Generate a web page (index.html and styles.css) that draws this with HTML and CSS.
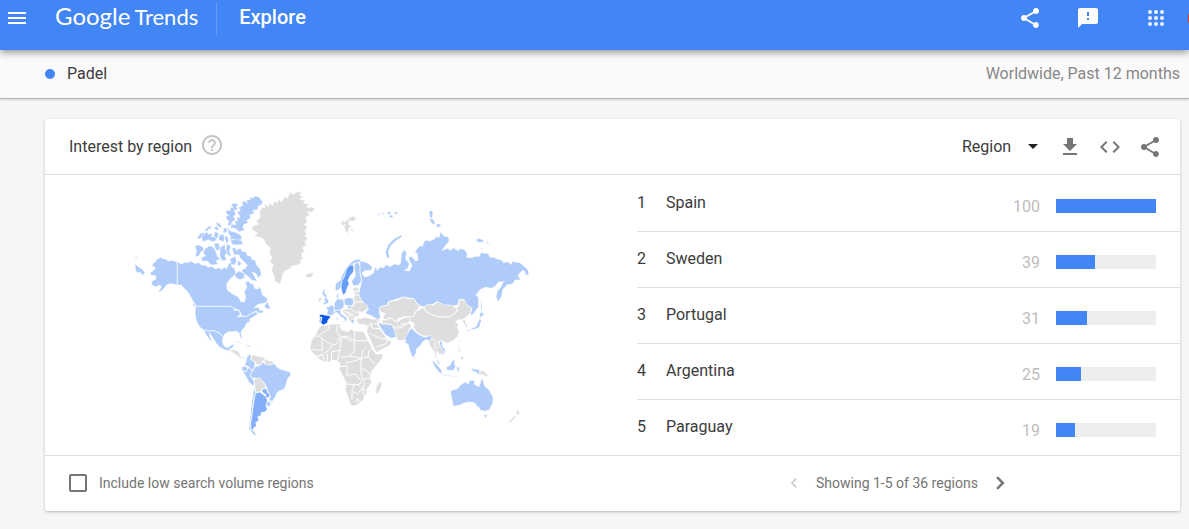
FILE: index.html
```
<!DOCTYPE html>
<html lang="en">
<head>
  <meta charset="utf-8">
  <meta name="viewport" content="width=device-width, initial-scale=1">
  <title>Padel - Explore - Google Trends</title>
  <link rel="stylesheet" href="styles.css">
</head>
<body>

<header class="topbar">
  <button class="icon-btn menu" type="button" aria-label="Main menu">
    <svg width="24" height="24" viewBox="0 0 24 24"><path d="M3 18h18v-2H3v2zm0-5h18v-2H3v2zm0-7v2h18V6H3z"/></svg>
  </button>
  <a class="logo" href="#"><span class="logo-google">Google</span><span class="logo-trends">Trends</span></a>
  <span class="page-name">Explore</span>
  <div class="top-actions">
    <button class="icon-btn" type="button" aria-label="Share">
      <svg width="24" height="24" viewBox="0 0 24 24"><path d="M18 16.1c-.8 0-1.400.3-2 .8l-7.100-4.200c.1-.2.1-.5.1-.7s0-.5-.1-.7L16 7.200c.5.5 1.200.8 2 .8 1.700 0 3-1.300 3-3s-1.300-3-3-3-3 1.300-3 3c0 .2 0 .5.1.7L8 9.800C7.500 9.300 6.800 9 6 9c-1.700 0-3 1.300-3 3s1.300 3 3 3c.8 0 1.500-.3 2-.8l7.100 4.200c-.1.2-.1.400-.1.600 0 1.600 1.300 2.900 2.900 2.900s2.900-1.300 2.900-2.900-1.200-2.900-2.800-2.900z"/></svg>
    </button>
    <button class="icon-btn" type="button" aria-label="Send feedback">
      <svg width="24" height="24" viewBox="0 0 24 24"><path d="M20 2H4c-1.100 0-2 .9-2 2v18l4-4h14c1.100 0 2-.9 2-2V4c0-1.100-.9-2-2-2zm-7 12h-2v-2h2v2zm0-4h-2V6h2v4z"/></svg>
    </button>
    <button class="icon-btn apps" type="button" aria-label="Google apps">
      <svg width="24" height="24" viewBox="0 0 24 24"><circle cx="6" cy="6" r="2"/><circle cx="12" cy="6" r="2"/><circle cx="18" cy="6" r="2"/><circle cx="6" cy="12" r="2"/><circle cx="12" cy="12" r="2"/><circle cx="18" cy="12" r="2"/><circle cx="6" cy="18" r="2"/><circle cx="12" cy="18" r="2"/><circle cx="18" cy="18" r="2"/></svg>
    </button>
    <span class="avatar"></span>
  </div>
</header>

<div class="termbar">
  <span class="dot"></span>
  <span class="term">Padel</span>
  <span class="scope">Worldwide, Past 12 months</span>
</div>

<main class="card">
  <div class="card-head">
    <h1>Interest by region</h1>
    <button class="icon-btn help" type="button" aria-label="Help">
      <svg width="24" height="24" viewBox="0 0 24 24"><path d="M11 18h2v-2h-2v2zm1-16C6.480 2 2 6.480 2 12s4.480 10 10 10 10-4.480 10-10S17.520 2 12 2zm0 18c-4.410 0-8-3.590-8-8s3.590-8 8-8 8 3.590 8 8-3.590 8-8 8zm0-14c-2.210 0-4 1.790-4 4h2c0-1.100.9-2 2-2s2 .9 2 2c0 2-3 1.750-3 5h2c0-2.250 3-2.500 3-5 0-2.210-1.790-4-4-4z"/></svg>
    </button>
    <div class="tools">
      <div class="resolution">
        <select aria-label="Resolution">
          <option>Region</option>
          <option>City</option>
        </select>
        <svg width="10" height="5" viewBox="0 0 10 5"><path d="M0 0l5 5 5-5z"/></svg>
      </div>
      <button class="icon-btn" type="button" aria-label="Download">
        <svg width="24" height="24" viewBox="0 0 24 24"><path d="M19 9h-4V3H9v6H5l7 7 7-7zM5 18v2h14v-2H5z"/></svg>
      </button>
      <button class="icon-btn" type="button" aria-label="Embed">
        <svg width="24" height="24" viewBox="0 0 24 24"><path d="M9.400 16.600L4.800 12l4.600-4.600L8 6l-6 6 6 6 1.400-1.400zm5.200 0l4.600-4.600-4.600-4.600L16 6l6 6-6 6-1.400-1.400z"/></svg>
      </button>
      <button class="icon-btn" type="button" aria-label="Share chart">
        <svg width="24" height="24" viewBox="0 0 24 24"><path d="M18 16.100c-.8 0-1.400.3-2 .8l-7.100-4.200c.1-.2.1-.5.1-.7s0-.5-.1-.7L16 7.200c.5.5 1.200.8 2 .8 1.700 0 3-1.300 3-3s-1.300-3-3-3-3 1.300-3 3c0 .2 0 .5.1.7L8 9.800C7.500 9.300 6.800 9 6 9c-1.700 0-3 1.300-3 3s1.300 3 3 3c.8 0 1.500-.3 2-.8l7.100 4.200c-.1.2-.1.400-.1.600 0 1.600 1.300 2.900 2.900 2.900s2.900-1.300 2.900-2.900-1.200-2.900-2.800-2.900z"/></svg>
      </button>
    </div>
  </div>

  <div class="card-body">
    <div class="map-wrap">
      <svg class="map" viewBox="0 0 1212 768" role="img" aria-label="World map of interest by region">
        <!-- North America -->
        <g class="low">
          <path d="M142 230L125 226 116 228 108 222 98 221 92 217 80 223 76 230 70 234 66 244 77 248 71 256 60 263 62 270 76 272 78 282 66 288 64 300 78 306 90 300 94 306 82 325 98 315 110 300 122 296 142 300Z"/>
          <path d="M15 236L26 246 34 250 45 262 40 272 30 262 22 264 16 256ZM14 214l8 3-4 4z"/>
          <path d="M142 230L155 237 165 231 175 233 182 228 195 235 207 233 215 240 226 240 235 247 245 244 255 251 266 248 275 253 285 246 290 252 295 236 303 232 306 246 314 250 318 268 302 280 290 298 292 315 310 328 325 335 333 350 343 351 347 335 342 320 350 308 346 290 356 288 362 296 370 296 374 310 384 312 388 303 395 318 398 330 412 340 412 350 398 356 385 358 372 368 388 366 387 375 402 376 396 385 385 384 379 378 365 385 350 396 335 392 328 376 315 372 300 364 200 364 190 350 182 336 174 322 162 310 155 301 142 300Z"/>
          <path d="M403 362L412 350 421 368 418 373 406 370ZM190 352l8 12-2 4-8-10z"/>
          <path d="M200 364L300 364 318 372 311 376 328 376 331 388 322 396 335 394 350 395 365 385 378 380 384 386 374 394 360 402 360 410 350 415 346 425 336 435 333 444 337 460 332 460 326 442 318 439 305 441 296 440 284 448 280 457 270 445 255 438 235 438 220 435 210 427 202 415 197 400 195 385 196 368Z"/>
          <path d="M220 435L235 438 255 438 270 445 280 457 277 468 282 483 293 488 304 480 315 476 308 488 300 492 296 498 285 495 268 486 258 474 248 458 238 443 240 454 247 470 240 466 229 451Z"/>
        </g>
        <!-- Arctic islands -->
        <g class="low islands">
          <path d="M328 90L322 82 332 76 325 68 338 62 336 52 345 48 352 56 350 44 362 44 360 36 372 39 372 33 386 36 398 50 394 60 386 62 382 74 368 76 374 84 360 90 362 100 350 106 354 114 342 118 338 128 346 134 328 140 318 132 308 128 300 132 306 118 318 120 314 108 324 108 320 96 330 98Z"/>
          <path d="M313 54L326 60 318 66 324 74 312 76 318 88 310 94 316 104 306 110 302 122 292 120 298 108 290 104 288 94 296 92 288 84 290 74 300 78 302 66 310 70 304 58Z"/>
          <path d="M258 112l8 2 6 6 4 10-8-4-6-4zM252 128l8-4 8 10-10 2zM280 130l12-2-2 14-10 2zM292 126l8 12 16 4 16 8 4 12-14 6-14-6-8 4 2-12-6-8zM238 128l6-4 2 4-6 4z"/>
          <path d="M201 160l10-14 12-6-4 12-10 10zM222 138l16-16 4 4-10 12zM214 152l16-10 8 6 10-4-4 12 12-2 4 12-12 4-14-6-14 6-4-8zM254 140l12 4-4 18-10-8zM268 150l12-2 4 14-4 8-14-6zM284 152l10 4 2 14-8 4z"/>
          <path d="M195 182L208 180 218 186 222 194 212 202 206 213 195 215 200 200Z"/>
          <path d="M224 192L240 182 252 188 258 202 262 214 270 222 258 228 264 238 244 240 232 228 216 228 214 218 228 212 220 204Z"/>
          <path d="M252 176l14-2 4 16-8 8-6-8zM270 188l14-10 2 16 6 6-8 12 6 12-14 4-6-14zM290 178l12 4-4 18 6 14-12-4-4-16z"/>
          <path d="M306 190L316 188 318 196 330 190 338 200 348 200 352 212 362 214 368 226 374 224 380 240 390 252 394 268 386 278 376 264 366 262 374 276 382 288 366 286 352 272 342 266 334 256 346 250 352 240 340 228 330 218 326 208 312 210Z"/>
          <path d="M300 222l14-8 6 12-6 14-10-2zM314 266l14-8 14 8 2 12-14 6-12-6zM302 166l16-4 18 6 2 10-20 2-12-2zM324 226l10 8-6 10-6-6z"/>
        </g>
        <g class="none">
          <path d="M388 80L396 66 405 68 403 55 414 64 420 54 428 62 432 48 442 54 446 42 455 50 464 34 472 40 480 22 492 28 500 20 515 22 510 32 522 34 508 42 526 46 520 54 538 58 530 68 546 66 556 70 546 82 532 80 540 90 528 96 532 112 524 118 532 128 524 136 532 148 524 152 534 162 524 170 530 180 518 188 524 200 514 206 520 222 510 226 516 234 502 240 488 242 478 252 465 258 458 268 456 282 450 298 442 291 436 294 432 272 424 254 430 240 420 230 426 216 418 206 420 188 408 178 400 162 386 156 372 154 382 144 364 132 368 122 386 118 378 108 390 98Z"/>
          <path d="M524 270L532 268 536 264 548 263 550 271 541 278 530 278Z"/>
          <path d="M632 110l8-4 4 6 8-10 6 6-2 10 10 8-8 2-4 18-8-8-4-12 2-8-8 6zM654 100l14-6 12 4-8 10-12 2zM664 130l6 2-2 8-6-4z"/>
          <path d="M300 494l16 1 11 5 5 15 12 3-4 3-10-2-12-10-13-7zM312 467l12 1 16 9-8-1-10-4zM345 479l10 0 14 6-12 1zM376 486h8v2h-8z"/>
        </g>

        <!-- South America -->
        <g class="low" transform="translate(150 345)">
          <path d="M200 172L210 162 214 168 212 178 225 186 224 200 218 212 206 200 194 196 198 184Z"/>
          <path d="M190 198L205 203 198 215 188 212 185 204Z"/>
          <path d="M188 214L198 216 206 202 218 214 210 226 218 236 224 248 220 258 206 246 198 230Z"/>
          <path d="M225 200L240 196 248 186 256 192 275 194 282 190 290 200 298 206 310 210 330 216 333 224 322 238 318 256 312 268 298 273 290 280 287 290 276 305 267 300 271 288 264 276 260 262 252 248 240 236 226 234 216 234 210 226 218 214Z"/>
          <path d="M222 262L228 278 223 290 219 315 215 345 211 370 213 388 222 394 232 410 218 402 207 386 209 366 212 330 218 290Z"/>
          <path d="M262 302L274 308 268 320 258 316Z"/>
          <path class="mid2" d="M246 268L260 266 262 277 270 284 266 294 256 292 258 284 246 276Z"/>
          <path class="mid2" d="M228 278L240 276 250 284 258 290 262 300 258 318 262 328 254 336 243 338 244 346 234 350 236 362 227 368 230 378 221 384 220 392 213 386 212 370 216 345 220 315 224 290Z"/>
          <path class="none" d="M214 168L222 164 232 169 250 171 254 180 246 186 242 195 230 194 225 186 212 178Z"/>
          <path class="none" d="M253 174L264 182 280 184 282 190 274 194 262 195 253 190Z"/>
          <path class="none" d="M222 238L238 234 252 248 258 262 246 268 242 274 228 278 224 260Z"/>
        </g>

        <!-- Africa -->
        <g class="none" transform="translate(510 285)">
          <path d="M65 136L80 136 98 132 122 132 120 142 126 150 145 155 150 148 168 153 190 154 198 168 206 186 218 206 226 222 249 222 246 236 230 256 216 272 211 288 215 308 203 324 200 340 190 358 176 372 162 378 151 375 145 355 136 332 138 306 126 284 118 268 120 250 110 242 98 240 88 246 68 245 50 230 36 216 30 204 34 182 48 162 56 144Z"/>
          <path d="M243 302L246 312 236 340 230 343 227 332 230 318Z"/>
          <path d="M204 138L212 128 232 131 240 148 252 164 262 178 266 182 276 182 268 198 250 206 228 218 218 196 208 172 200 155Z"/>
          <path d="M170 114L182 116 196 111 214 117 232 118 234 130 214 132 200 137 188 132 178 134 172 126Z"/>
          <path class="border" d="M87 136l-2 12-30 20-21 0M56 168l34 24 16 2 18-14-14-28 2-18M65 172l2 40-30-4M98 196l-10 12-20 18-20 2M110 180l30-12 24 14 0-29M124 168l40 20-2 28-14 12M164 182h40M124 178l-4 32-26 6M95 216l-2 30M120 210l-8 32M82 222l0 24M70 226l0 18M56 230l10-8M148 228l-24 4M148 230l16 0 20 6 20-6M184 236l4-24 12-10M204 230l22 24M218 206l-12 8-2 16M136 250l36-10 12-4M184 236l-2 30 16 4 14 18M120 260l22-2-2 28M140 286l28-4 14 20M182 268l4 30 28-4M136 312l38 2 20-14M162 314l-6 18 0 28M156 334l16 8 14-16 14 6M174 314l16 12 4-18M186 326l8 28M168 360l6-4 4 6-6 4z"/>
          <path class="border" d="M212 128l4 16 22 2M208 160l30 14 24 4M230 200l26-8 6-12"/>
        </g>

        <!-- Europe -->
        <g transform="translate(510 285)">
          <path class="low" d="M66 42L70 28 75 28 74 40 80 44 80 54 87 62 85 70 70 74 68 70 76 66 72 60 76 52Z"/>
          <path class="none" d="M55 58L62 52 65 58 63 65 54 66Z"/>
          <path class="low" d="M76 82L88 80 92 74 104 80 102 94 103 103 90 107 80 104 83 90Z"/>
          <path class="low" d="M102 82L104 66 110 60 112 54 118 58 130 57 133 72 130 84 120 90 104 92Z"/>
          <path class="low" d="M132 58L142 53 158 54 162 66 158 76 146 78 133 74Z"/>
          <path class="low" d="M104 92L116 90 123 92 122 100 136 110 142 116 136 126 132 116 120 108 112 98 104 100ZM124 124l10 0 0 5zM110 110l4 2-1 10-4-1zM144 78l12 0 0 8-14 2zM110 44l6-4 0 14-6 2z"/>
          <path class="none" d="M158 30L160 22 172 22 178 30 180 42 185 56 196 66 206 76 204 88 192 92 186 98 178 94 170 100 160 95 152 86 160 78 164 66 160 54 164 44Z"/>
          <path class="none" d="M126 88L142 88 152 84 160 95 180 98 176 108 162 112 163 120 158 130 150 126 144 112 130 98Z"/>
          <path class="border" d="M158 34l22 0M160 44l20 2M164 66l30 0M145 94l4 14 12 0M134 94l14 6 12 4"/>
          <path class="low" d="M151 120l10-2 2 6-6 8z"/>
          <path class="none" d="M214 106L228 108 240 118 236 126 228 120Z"/>
          <path class="top" d="M58 105L64 103 90 108 92 111 84 120 82 129 70 135 62 129 66 112 59 112Z"/>
          <path class="mid2" d="M59 113L65 113 62 129 57 129Z"/>
          <path class="low" d="M235 126L246 132 262 132 276 134 284 150 290 172 272 174 256 164 246 150 238 138Z"/>
        </g>
        <g transform="translate(540 -15)">
          <path class="low" d="M75 325L77 310 90 302 96 286 106 268 118 252 132 240 152 236 151 246 132 250 115 262 106 285 98 300 95 318 86 330 79 332Z"/>
          <path class="low" d="M132 252L146 246 152 262 150 280 155 300 146 316 130 318 124 304 136 288 134 268Z"/>
          <path class="mid" d="M96 302L104 288 108 270 116 258 128 253 132 264 130 276 120 288 114 302 118 312 112 322 108 338 100 345 96 338 93 322Z"/>
          <path class="low" d="M230 233L226 215 234 195 250 178 272 165 277 170 258 182 244 196 236 212 238 234ZM200 104l8-3 2 6zM214 98l8 2-4 6zM230 98l10-4 4 6-8 4zM236 108l10-4 4 8-8 2zM252 98l12-4-2 8-8 2zM222 108l5 2-3 3z"/>
        </g>

        <!-- Russia -->
        <g class="low">
          <path d="M690 227L704 230 715 235 728 247 722 257 705 257 696 264 704 276 718 272 730 264 736 245 742 256 750 246 762 248 766 238 780 244 795 236 806 240 812 234 814 206 822 194 830 202 827 222 838 236 834 250 824 256 838 258 846 240 838 228 836 214 848 216 856 228 864 226 862 206 854 202 862 190 870 182 878 183 880 175 886 165 900 168 912 162 920 154 926 158 932 140 942 153 956 156 958 168 948 180 936 196 952 190 962 196 970 188 985 197 990 190 1005 195 1012 206 1010 217 1024 218 1036 214 1048 214 1052 203 1075 205 1080 216 1096 218 1105 223 1118 226 1120 233 1132 230 1145 238 1146 229 1170 233 1180 242 1190 250 1196 258 1196 272 1186 268 1182 256 1175 258 1164 272 1173 285 1155 285 1148 297 1132 300 1118 314 1115 335 1103 352 1098 334 1102 318 1112 306 1120 290 1105 292 1096 304 1084 310 1065 307 1050 315 1038 330 1046 338 1046 365 1030 387 1020 392 1025 372 1008 362 1000 343 987 344 984 360 965 364 940 362 920 350 905 360 880 365 868 362 850 341 820 336 775 350 772 360 750 366 748 378 752 400 742 402 725 393 712 388 705 382 715 375 712 362 700 352 692 342 686 326 690 310 695 285 690 260Z"/>
          <path d="M897 80l6-4 6 6-2 16-8 0zM898 98l10 4 8 10-4 8-10-8zM918 118l12-2 4 8-14 4zM1038 164l6-4 16 4 0 8-18 0zM1068 170l14 4-2 2-12-2zM1050 188l8 2-4 4zM1174 216h8v2h-8z"/>
          <path d="M1052 342l4 20 0 18-4-10z"/>
        </g>

        <!-- Central and East Asia -->
        <g class="none">
          <path d="M747 372L752 364 774 360 776 350 800 346 820 336 836 342 850 340 858 352 870 362 862 376 855 380 850 395 825 395 805 400 800 410 780 398 765 405 758 396 766 386 752 382Z"/>
          <path d="M758 418L756 402 766 406 780 399 800 411 825 397 850 396 852 404 838 410 832 416 816 416 812 430 800 432 782 418 768 416Z"/>
          <path d="M790 425L804 430 816 418 838 414 846 424 836 434 836 448 824 460 826 468 802 466 798 448Z"/>
        </g>
        <g class="none" transform="translate(780 315)">
          <path d="M60 82L74 76 76 66 90 58 102 52 108 65 125 75 150 82 180 80 195 70 204 62 194 56 205 50 208 30 224 30 230 44 246 54 240 70 226 84 214 90 206 88 196 96 206 102 202 112 208 122 204 138 190 152 172 160 156 152 142 155 128 148 118 138 100 138 82 128 70 112 72 100 60 94Z"/>
          <path d="M102 50L115 42 130 46 142 36 165 45 185 46 202 56 200 64 180 80 150 80 125 74 108 64Z"/>
          <path d="M118 142L126 146 136 150 146 158 152 170 162 184 158 194 148 194 142 182 138 190 142 208 136 202 132 182 122 172 116 158ZM214 90l12 0 2 10 6 10-6 4-6-14zM204 150l4-2-1 10zM204 170l6 0-1 10 5 8-8-4zM210 196l10 6 2 6-8 2zM72 200l6 2-2 8-4-4z"/>
          <path class="border" d="M134 156l2 20M146 170l-8 8M20 105l10 10 30-20"/>
          <path d="M270 240L285 245 292 255 300 262 286 258 278 254 270 256ZM380 356l6 8 5 2-8 10-5 0 2-8zM374 376l4 2-8 12-12 8-4-2z"/>
        </g>
        <g class="low" transform="translate(780 315)">
          <path d="M58 120L66 114 74 124 84 132 104 142 124 136 126 142 118 154 110 148 100 154 90 168 80 176 78 190 72 202 66 200 58 178 54 162 44 158 48 150 42 148 50 136Z"/>
          <path d="M148 155L158 154 156 166 166 180 163 192 155 196 160 184 150 168Z"/>
          <path d="M232 122L246 114 258 110 264 96 270 84 274 92 268 112 256 118 244 118 234 126ZM268 72l6-6 10 6-8 6-6 6z"/>
          <path d="M124 210L134 216 146 230 156 242 156 252 146 246 134 230ZM156 252l26 4 0 3-24-4zM168 232L180 226 186 212 194 208 194 222 197 230 190 242 178 241 170 240ZM140 208l6 4 4 14-6-4zM200 230l14-2-8 4 4 12-4-2-4 4zM240 234l10 2 6 2 12 0 0 18-8-8-10-4-4-4zM216 232l2 6-2 2zM186 258l24 2-24 1z"/>
          <path d="M182 305L186 300 202 296 212 284 226 276 234 282 240 270 256 272 252 282 266 290 270 282 274 265 280 272 284 288 296 298 304 312 310 322 308 340 298 360 284 364 270 360 264 348 258 350 258 342 250 338 238 336 220 340 208 346 190 349 188 340 184 322ZM282 374l10 0-3 9-4 1z"/>
        </g>
      </svg>
    </div>

    <ol class="regions">
      <li><span class="rank">1</span><span class="name">Spain</span><span class="value">100</span><span class="bar"><span class="fill" style="width:100%"></span></span></li>
      <li><span class="rank">2</span><span class="name">Sweden</span><span class="value">39</span><span class="bar"><span class="fill" style="width:39%"></span></span></li>
      <li><span class="rank">3</span><span class="name">Portugal</span><span class="value">31</span><span class="bar"><span class="fill" style="width:31%"></span></span></li>
      <li><span class="rank">4</span><span class="name">Argentina</span><span class="value">25</span><span class="bar"><span class="fill" style="width:25%"></span></span></li>
      <li><span class="rank">5</span><span class="name">Paraguay</span><span class="value">19</span><span class="bar"><span class="fill" style="width:19%"></span></span></li>
    </ol>
  </div>

  <div class="card-foot">
    <div class="low-volume">
      <input type="checkbox" id="low-volume">
      <label for="low-volume">Include low search volume regions</label>
    </div>
    <div class="pager">
      <button class="icon-btn" type="button" aria-label="Previous" disabled>
        <svg width="20" height="20" viewBox="0 0 24 24"><path d="M15.410 7.410L14 6l-6 6 6 6 1.410-1.410L10.830 12z"/></svg>
      </button>
      <span>Showing 1-5 of 36 regions</span>
      <button class="icon-btn" type="button" aria-label="Next">
        <svg width="20" height="20" viewBox="0 0 24 24"><path d="M9.500 4L7.400 6.100 13.300 12l-5.900 5.900L9.500 20l8-8z"/></svg>
      </button>
    </div>
  </div>
</main>

</body>
</html>
```
FILE: styles.css
```
* {
  box-sizing: border-box;
}
body {
  margin: 0;
  background: #f6f6f6;
  color: #3c3c3c;
  font-family: Roboto, "Liberation Sans", sans-serif;
  font-size: 16px;
  line-height: 24px;
  overflow-x: hidden;
}
.icon-btn {
  display: flex;
  padding: 0;
  border: 0;
  background: none;
  color: #757575;
  cursor: pointer;
}
svg {
  display: block;
  fill: currentColor;
}

/* header */
.topbar {
  position: relative;
  display: flex;
  align-items: center;
  height: 50px;
  padding: 0 0 14px 5px;
  background: #4285f4;
  color: #fff;
  box-shadow: 0 2px 8px rgba(0, 0, 0, 0.45);
}
.topbar .icon-btn {
  color: #fff;
}
.logo {
  display: flex;
  align-items: baseline;
  gap: 4px;
  margin-left: 26px;
  padding: 0 18px 4px 0;
  border-right: 1px solid #689df6;
  color: #fff;
  font-family: Lato, sans-serif;
  font-size: 22px;
  line-height: 28px;
  text-decoration: none;
}
.logo-google {
  font-size: 24px;
}
.page-name {
  margin-left: 22px;
  padding-bottom: 2px;
  font-size: 20px;
  font-weight: 500;
}
.top-actions {
  display: flex;
  align-items: center;
  gap: 34px;
  margin-left: auto;
}
.top-actions .apps {
  margin-left: 10px;
  opacity: 0.9;
}
.avatar {
  width: 1px;
  height: 8px;
  margin-left: -14px;
  background: #d23f31;
}

/* search term */
.termbar {
  display: flex;
  align-items: center;
  height: 49px;
  padding: 0 9px 0 45px;
  border-bottom: 1px solid #b4b4b4;
  background: #fafafa;
  box-shadow: 0 1px 2px rgba(0, 0, 0, 0.15);
}
.dot {
  width: 10px;
  height: 10px;
  margin-right: 12px;
  border-radius: 50%;
  background: #4285f4;
}
.scope {
  margin-left: auto;
  color: #888;
}

/* card */
.card {
  margin: 20px 9px 17px 45px;
  border-radius: 2px;
  background: #fff;
  box-shadow: 0 1px 3px rgba(0, 0, 0, 0.25);
}
.card-head {
  display: flex;
  align-items: center;
  height: 56px;
  padding: 0 18px 0 24px;
  border-bottom: 1px solid #e0e0e0;
}
.card-head h1 {
  margin: 0;
  font-size: 16px;
  font-weight: 400;
}
.card-head .help {
  margin-left: 8px;
  padding-bottom: 4px;
  color: #c4c4c4;
}
.tools {
  display: flex;
  align-items: center;
  gap: 16px;
  margin-left: auto;
}
.resolution {
  display: flex;
  align-items: center;
  margin-right: 4px;
  color: #212121;
}
.resolution select {
  width: 66px;
  padding: 0;
  border: 0;
  background: none;
  color: #3c3c3c;
  font: inherit;
  appearance: none;
}

.card-body {
  display: grid;
  grid-template-columns: 592fr 543fr;
  min-height: 280px;
}
.map-wrap {
  padding: 10px 0 0 85px;
}
.map {
  width: 404px;
  height: 256px;
}
.map path {
  stroke: #fff;
  stroke-width: 2;
  stroke-linejoin: round;
}
.map .islands path {
  stroke-width: 1;
}
.low {
  fill: #aecbfa;
}
.none {
  fill: #dedede;
}
.mid {
  fill: #669df6;
}
.mid2 {
  fill: #84aff8;
}
.top {
  fill: #0b57e0;
}
.map .border {
  fill: none;
  stroke-width: 3;
}

.regions {
  margin: 0;
  padding: 1px 0 0;
  list-style: none;
}
.regions li {
  display: flex;
  align-items: center;
  height: 56px;
  padding-right: 24px;
  border-bottom: 1px solid #e0e0e0;
}
.regions li:last-child {
  height: 55px;
  border-bottom: 0;
}
.rank {
  width: 29px;
}
.rank,
.name {
  padding-bottom: 2px;
}
.value {
  margin-left: auto;
  padding-top: 6px;
  color: #bdbdbd;
}
.bar {
  width: 100px;
  height: 14px;
  margin: 4px 0 0 16px;
  background: #eee;
}
.fill {
  display: block;
  height: 100%;
  background: #4285f4;
}

.card-foot {
  display: grid;
  grid-template-columns: 739fr 396fr;
  align-items: center;
  height: 56px;
  padding-bottom: 2px;
  border-top: 1px solid #e0e0e0;
  color: #757575;
  font-size: 14px;
}
.low-volume {
  display: flex;
  align-items: center;
  gap: 12px;
  padding-left: 24px;
}
.low-volume input {
  width: 18px;
  height: 18px;
  margin: 0;
  border: 2px solid #757575;
  border-radius: 2px;
  appearance: none;
}
.low-volume input:checked {
  background: #4285f4;
}
.pager {
  display: flex;
  align-items: center;
  gap: 12px;
}
.pager button:disabled {
  color: #ccc;
}
```
